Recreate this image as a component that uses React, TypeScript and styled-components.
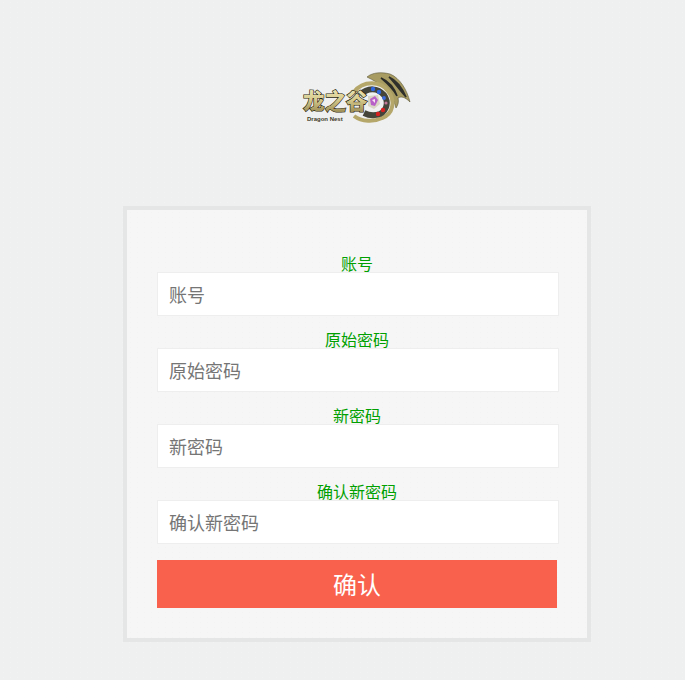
import React from "react";
import styled, { createGlobalStyle } from "styled-components";

const Global = createGlobalStyle`
  html, body {
    margin: 0;
    padding: 0;
    background-color: #eff0f0;
    background-image: radial-gradient(#f2f3f3 0.5px, transparent 0.8px);
    background-size: 7px 5px;
    font-family: "Noto Sans CJK SC", "Liberation Sans", sans-serif;
  }
`;

const Page = styled.div`
  width: 468px;
  height: 680px;
  margin-left: 123px;
  display: flex;
  flex-direction: column;
  align-items: center;
`;

const LogoWrap = styled.div`
  width: 110px;
  height: 55px;
  margin-top: 70px;
  margin-bottom: 81px;
  flex-shrink: 0;
`;

const Card = styled.form`
  box-sizing: border-box;
  width: 468px;
  height: 436px;
  border: 4px solid #e5e6e6;
  padding: 30px;
  background-color: #f6f6f6;
  background-image: radial-gradient(#f3f3f3 0.6px, transparent 0.9px);
  background-size: 7px 5px;
`;

const Field = styled.div`
  width: 400px;
`;

const Label = styled.label`
  display: flex;
  box-sizing: border-box;
  height: 32px;
  padding-bottom: 1px;
  align-items: flex-end;
  justify-content: center;
  font-size: 16px;
  line-height: 16px;
  color: #00a000;
`;

const Input = styled.input`
  box-sizing: border-box;
  display: block;
  width: 402px;
  height: 44px;
  margin: 0;
  padding: 0 11px;
  border: 1px solid #eeeeee;
  border-radius: 0;
  background: #ffffff;
  outline: none;
  font-family: inherit;
  font-size: 18px;
  color: #555555;

  &::placeholder {
    color: #757575;
    opacity: 1;
  }
`;

const Submit = styled.button`
  display: block;
  width: 400px;
  height: 48px;
  margin-top: 16px;
  padding: 0 0 2px;
  border: 0;
  background: #f9614d;
  color: #ffffff;
  font-family: inherit;
  font-size: 24px;
  cursor: pointer;
`;

const Logo = () => (
  <svg width="110" height="55" viewBox="0 0 110 55">
    <defs>
      <linearGradient id="gold" x1="0" y1="0" x2="0" y2="1">
        <stop offset="0" stopColor="#f2edc4" />
        <stop offset="0.5" stopColor="#d8cc8e" />
        <stop offset="1" stopColor="#8f7f48" />
      </linearGradient>
    </defs>
    {/* wing */}
    <path
      d="M65 7 C71 2 80 2 88 4 C98 8 105 20 108 32 C103 27 99 26 96 28 C97 32 96 35 94 38 C92 30 88 23 82 18 C77 13 71 10 65 7 Z"
      fill="#a89c62"
      stroke="#5d5738"
      strokeWidth="0.6"
    />
    <path d="M79 8 C88 12 93 20 95 26 C92 20 86 14 79 8 Z" fill="#2b2c28" stroke="#2b2c28" strokeWidth="1.6" />
    <path d="M87 7 C96 11 101 20 104 27 C99 22 93 13 87 7 Z" fill="#2f302b" stroke="#2f302b" strokeWidth="1.6" />
    {/* ring */}
    <path
      d="M52 22 C61 10 79 11 86 21 C94 31 91 44 80 48 C72 52 60 52 52 46"
      fill="none"
      stroke="#b5a76a"
      strokeWidth="4"
    />
    <path
      d="M58 25 C66 17 76 18 82 25 C87 32 85 40 78 44 C72 46 66 45 62 43"
      fill="none"
      stroke="#45453a"
      strokeWidth="6"
    />
    <path d="M66 26 L76 25 L78 34 L72 39 L66 36 Z" fill="#d9d5c4" />
    <circle cx="58" cy="22" r="1.5" fill="#2f66e0" />
    <circle cx="71" cy="19" r="2.2" fill="#2f66e0" />
    <circle cx="77" cy="22" r="2.2" fill="#2f66e0" />
    <circle cx="82" cy="28" r="1.9" fill="#3c6ce0" />
    <circle cx="84" cy="33" r="1.6" fill="#c27898" />
    <circle cx="81" cy="40" r="2.2" fill="#d82020" />
    <circle cx="76" cy="44" r="2.2" fill="#d82020" />
    <path d="M68 29 L73 26 L76 30 L73 36 L69 35 Z" fill="#b860c8" />
    <path d="M70 30 L73 29 L73 33 Z" fill="#f8e4f4" />
    <text
      x="1"
      y="39"
      fontFamily="'Noto Sans CJK SC', sans-serif"
      fontWeight="900"
      fontSize="21.5"
      fill="url(#gold)"
      stroke="#1f1b0a"
      strokeWidth="1.2"
      paintOrder="stroke"
    >
      龙之谷
    </text>
    <text
      x="5"
      y="51"
      fontFamily="'Liberation Sans', sans-serif"
      fontWeight="700"
      fontSize="6"
      fill="#3f3b28"
    >
      Dragon Nest
    </text>
  </svg>
);

const fields = ["账号", "原始密码", "新密码", "确认新密码"];

export default function App() {
  return (
    <>
      <Global />
      <Page>
        <LogoWrap>
          <Logo />
        </LogoWrap>
        <Card onSubmit={(e) => e.preventDefault()}>
          {fields.map((name) => (
            <Field key={name}>
              <Label>{name}</Label>
              <Input placeholder={name} />
            </Field>
          ))}
          <Submit type="submit">确认</Submit>
        </Card>
      </Page>
    </>
  );
}
